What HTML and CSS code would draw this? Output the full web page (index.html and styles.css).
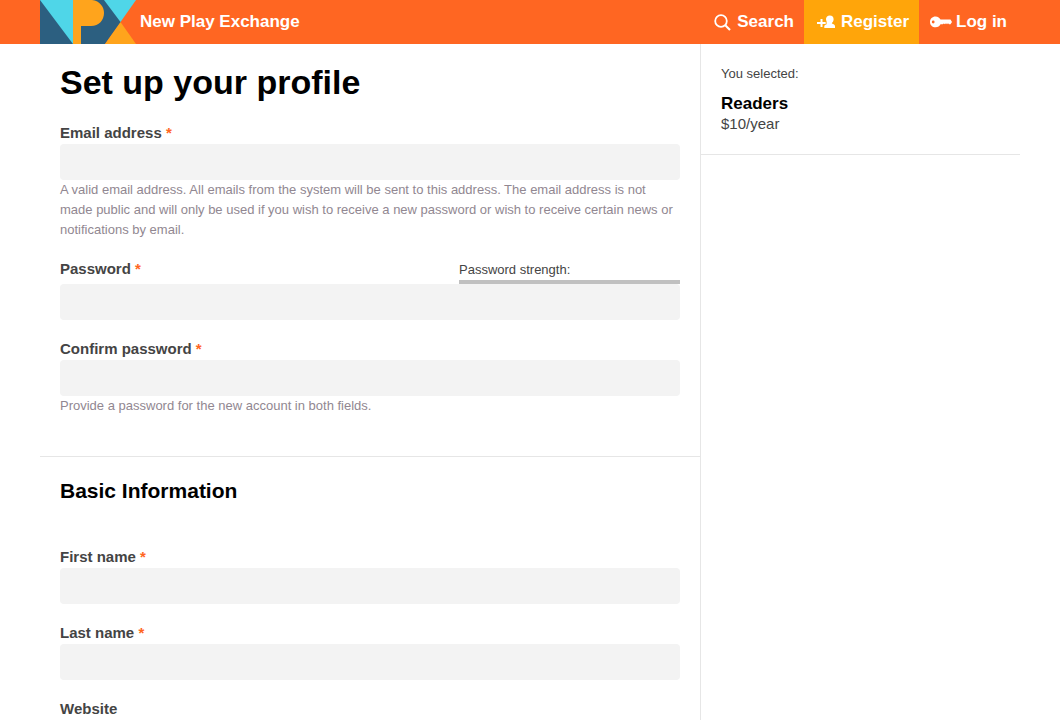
FILE: index.html
```html
<!DOCTYPE html>
<html lang="en">
<head>
<meta charset="utf-8">
<meta name="viewport" content="width=device-width, initial-scale=1">
<title>Set up your profile | New Play Exchange</title>
<link rel="stylesheet" href="styles.css">
</head>
<body>
<header class="site-header">
  <a class="brand" href="#">
    <svg class="brand-logo" viewBox="0 0 96 44" aria-hidden="true">
      <path fill="#2c5f80" d="M0 0H65L81 22L65 44H0Z"/>
      <path fill="#4fd6e8" d="M0 0H34V44H33Z"/>
      <path fill="#4fd6e8" d="M64 0H96L80.500 22Z"/>
      <path fill="#ffa41c" d="M33 0H52C60 1 64 7 64 13C64 20 59 26 51 26H41V44H33Z"/>
      <path fill="#ffa41c" d="M80.500 22L96 44H65Z"/>
    </svg>
    <span>New Play Exchange</span>
  </a>
  <nav class="site-nav">
    <a class="nav-link" href="#">
      <svg class="icon-search" viewBox="0 0 17 17" aria-hidden="true"><circle cx="7" cy="7" r="5.800" fill="none" stroke="#fff" stroke-width="1.800"/><path d="M11.300 11.300L16 16" stroke="#fff" stroke-width="2.100"/></svg>
      <span>Search</span>
    </a>
    <a class="nav-link nav-link-register" href="#">
      <svg class="icon-register" viewBox="0 0 18 14" aria-hidden="true"><path fill="#fff" d="M3.500 4H5.500V7H8.700V9H5.500V12H3.500V9H0V7H3.500ZM12.800 0.500C15.300 0.500 16.700 2.100 16.600 4.400C16.500 6 15.900 7.100 14.900 7.900V8.500C16.500 9.200 18 9.700 18 11.200V13H7.300V11.200C7.300 10.300 8.300 9.700 9.600 9.200V6.500C9.200 5.800 9 5 9 4.100C9 2 10.600 0.500 12.800 0.500Z"/></svg>
      <span>Register</span>
    </a>
    <a class="nav-link nav-link-login" href="#">
      <svg class="icon-key" viewBox="0 0 22 12" aria-hidden="true"><path fill="#fff" fill-rule="evenodd" d="M5.500 0.500C8 0.500 9.700 2 10.500 3.600H20.500L22 6L20.500 8.200H19L18 7.300L17 8.200L16 7.300L15 8.200L13.800 7.500L12.800 8.200H10.500C9.600 10 8 11.300 5.500 11.300C2.300 11.300 0 9 0 5.900S2.300 0.500 5.500 0.500ZM3.200 4.600A1.400 1.400 0 1 0 3.200 7.400A1.400 1.400 0 1 0 3.200 4.600Z"/></svg>
      <span>Log in</span>
    </a>
  </nav>
</header>
<div class="page">
  <main class="content">
    <form>
      <section class="section">
        <h1 class="page-title">Set up your profile</h1>
        <div class="field">
          <label class="label" for="email">Email address <span class="required">*</span></label>
          <input class="input" id="email" type="email" required>
          <p class="help">A valid email address. All emails from the system will be sent to this address. The email address is not made public and will only be used if you wish to receive a new password or wish to receive certain news or notifications by email.</p>
        </div>
        <div class="field">
          <div class="password-head">
            <label class="label" for="password">Password <span class="required">*</span></label>
            <div class="strength">Password strength:</div>
          </div>
          <input class="input" id="password" type="password" required>
        </div>
        <div class="field">
          <label class="label" for="confirm">Confirm password <span class="required">*</span></label>
          <input class="input" id="confirm" type="password" required>
          <p class="help">Provide a password for the new account in both fields.</p>
        </div>
      </section>
      <section class="section">
        <h2 class="section-title">Basic Information</h2>
        <div class="field">
          <label class="label" for="first-name">First name <span class="required">*</span></label>
          <input class="input" id="first-name" type="text" required>
        </div>
        <div class="field">
          <label class="label" for="last-name">Last name <span class="required">*</span></label>
          <input class="input" id="last-name" type="text" required>
        </div>
        <div class="field">
          <label class="label" for="website">Website</label>
          <input class="input" id="website" type="url">
        </div>
      </section>
    </form>
  </main>
  <aside class="sidebar">
    <div class="plan">
      <p class="plan-intro">You selected:</p>
      <h3 class="plan-name">Readers</h3>
      <p class="plan-price">$10/year</p>
    </div>
  </aside>
</div>
</body>
</html>
```
FILE: styles.css
```css
* {
  box-sizing: border-box;
}

body {
  margin: 0;
  background: #fff;
  color: #444;
  font-family: "Liberation Sans", Arial, Helvetica, sans-serif;
  font-size: 15px;
  line-height: 20px;
}

h1, h2, h3, p {
  margin: 0;
}

.site-header {
  display: flex;
  justify-content: space-between;
  height: 44px;
  padding: 0 44px 0 40px;
  background: #ff6622;
}

.brand,
.nav-link {
  display: flex;
  color: #fff;
  font-size: 17px;
  font-weight: bold;
  line-height: 43px;
  text-decoration: none;
}

.brand {
  gap: 4px;
}

.brand-logo {
  width: 96px;
  height: 44px;
}

.site-nav {
  display: flex;
}

.nav-link {
  align-items: center;
  gap: 6px;
  padding: 0 10px;
}

.nav-link span {
  align-self: flex-start;
}

.nav-link-register {
  padding-left: 13px;
  background: #ffa50a;
}

.nav-link-login {
  gap: 4px;
  padding: 0 9px 0 11px;
}

.icon-search {
  width: 17px;
  height: 17px;
}

.icon-register {
  width: 18px;
  height: 14px;
}

.icon-key {
  width: 22px;
  height: 12px;
}

.page {
  display: flex;
  padding: 0 40px;
}

.content {
  flex: 1;
}

.section {
  padding: 18px 20px 40px;
}

.section + .section {
  border-top: 1px solid #e6e6e6;
}

.page-title {
  margin-bottom: 18px;
  color: #000;
  font-size: 34px;
  line-height: 40px;
}

.section-title {
  margin-bottom: 37px;
  color: #000;
  font-size: 21px;
  line-height: 32px;
}

.field + .field {
  margin-top: 16px;
}

.label {
  display: block;
  padding-top: 2px;
  font-weight: bold;
  line-height: 22px;
}

.required {
  color: #ff6622;
}

.input {
  display: block;
  width: 100%;
  height: 36px;
  padding: 0 10px;
  border: 0;
  border-radius: 4px;
  background: #f3f3f3;
  color: inherit;
  font: inherit;
}

.help {
  color: #918791;
  font-size: 13px;
}

.password-head {
  display: flex;
  justify-content: space-between;
}

.strength {
  width: 221px;
  padding-top: 4px;
  border-bottom: 4px solid #c0c0c0;
  font-size: 13px;
}

.sidebar {
  width: 320px;
  border-left: 1px solid #e6e6e6;
}

.plan {
  padding: 20px;
  border-bottom: 1px solid #e6e6e6;
}

.plan-intro {
  margin-bottom: 10px;
  font-size: 13px;
}

.plan-name {
  color: #000;
  font-size: 17px;
}
```
